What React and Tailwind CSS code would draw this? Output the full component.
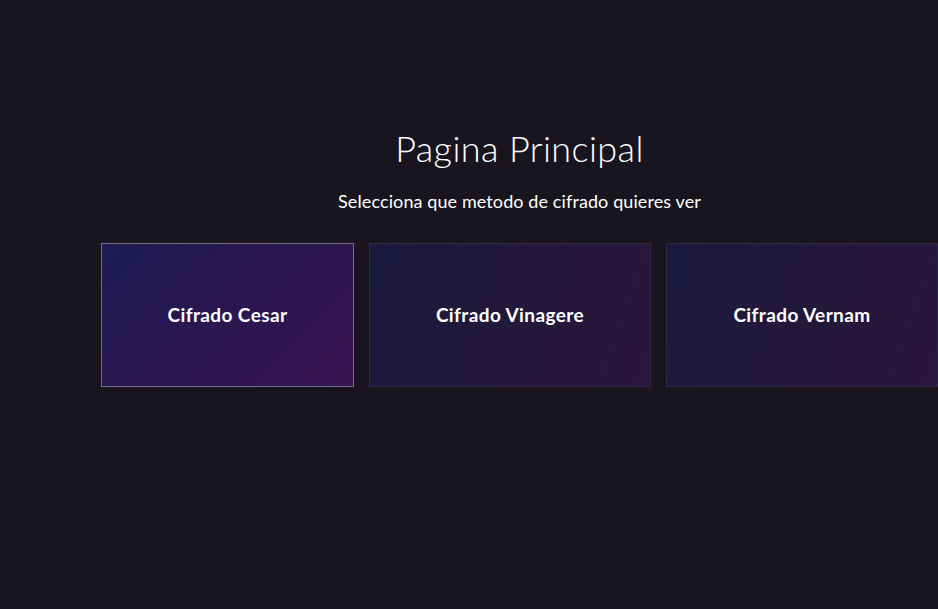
const methods = [
  { name: "Cifrado Cesar", width: "w-[253px]", active: true },
  { name: "Cifrado Vinagere", width: "w-[282px]" },
  { name: "Cifrado Vernam", width: "w-[272px]" },
];

function MethodCard({ name, width, active }) {
  return (
    <button
      className={`${width} h-[144px] shrink-0 flex items-center justify-center border text-[19px] font-bold tracking-[0.4px] text-white cursor-pointer
        ${active
          ? "border-[#76718a] bg-[linear-gradient(135deg,#1d1b55_0%,#2c1650_55%,#3a1452_100%)]"
          : "border-[#2e2a45] bg-[linear-gradient(110deg,#1b1a3e_0%,#231839_55%,#2b153d_100%)]"}`}
    >
      {name}
    </button>
  );
}

export default function App() {
  return (
    <div
      className="min-h-screen w-full overflow-hidden bg-[#18151f] text-white"
      style={{ fontFamily: "Lato, 'Liberation Sans', sans-serif" }}
    >
      <div className="pl-[101px] pt-[126px] flex flex-col items-center">
        <h1 className="text-[36px] font-light leading-[44px] tracking-[0.4px]">Pagina Principal</h1>
        <p className="mt-[20px] text-[18px] leading-[22px] font-normal tracking-[0.1px]">
          Selecciona que metodo de cifrado quieres ver
        </p>
        <div className="mt-[31px] flex gap-[15px] self-start">
          {methods.map((m) => (
            <MethodCard key={m.name} {...m} />
          ))}
        </div>
      </div>
    </div>
  );
}
